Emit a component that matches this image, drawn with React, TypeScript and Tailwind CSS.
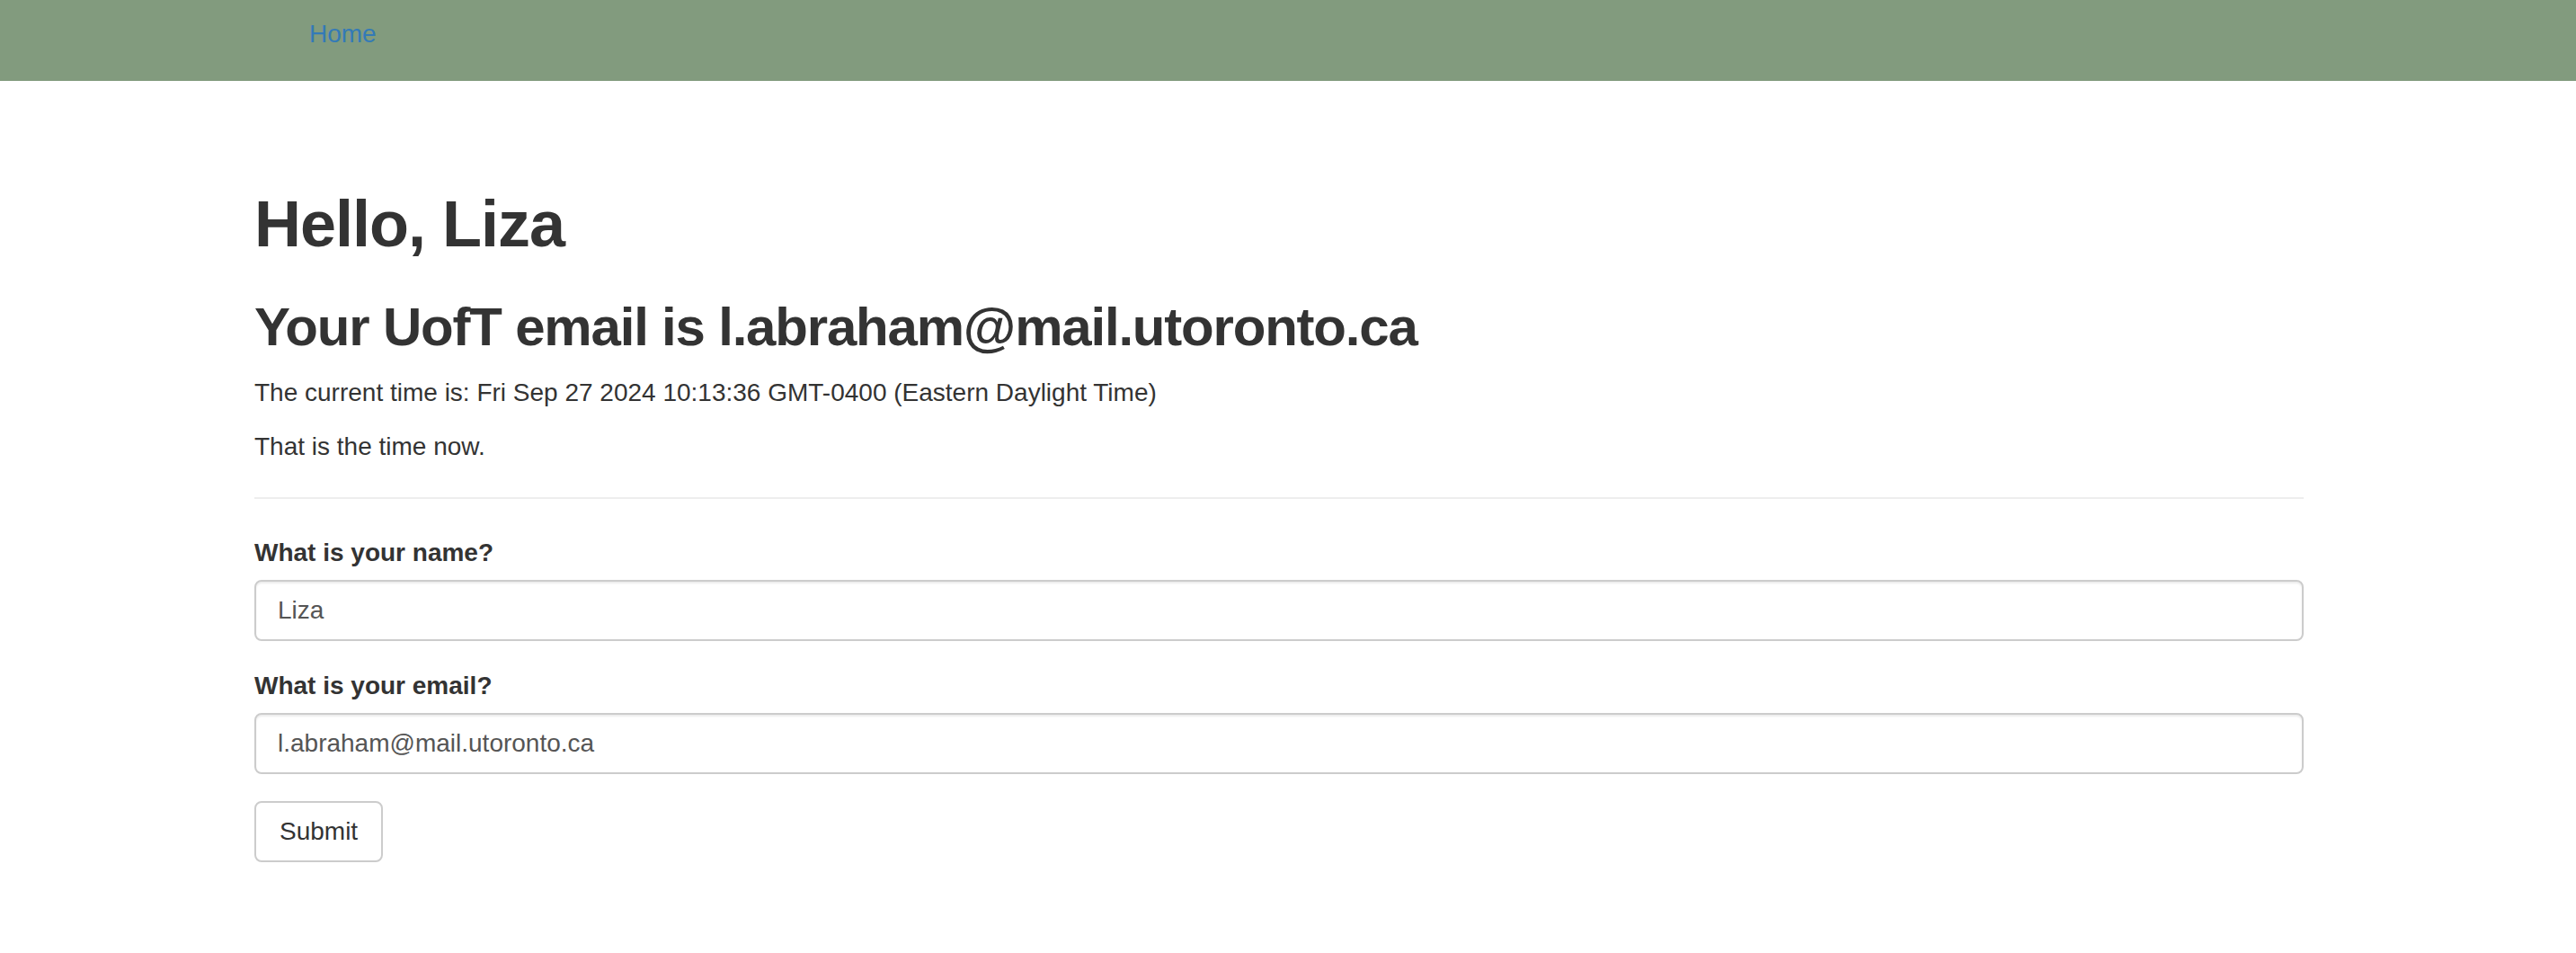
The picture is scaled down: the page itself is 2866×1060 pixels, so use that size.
import { useState } from 'react';

const App = () => {
  const [name, setName] = useState('Liza');
  const [email, setEmail] = useState('l.abraham@mail.utoronto.ca');

  return (
    <div className="min-h-screen bg-white text-[#333] font-['Liberation_Sans',Arial,sans-serif]">
      {/* Barra de navegación */}
      <nav className="h-[90px] bg-[#829b7e]">
        <div className="pl-[344px] pt-[18px]">
          <a href="#" className="text-[28px] leading-[40px] text-[#337ab7]">
            Home
          </a>
        </div>
      </nav>

      <div className="ml-[283px] w-[2280px] flex flex-col">
        <h1 className="mt-[120px] text-[72px] leading-[79px] font-bold tracking-[-1px]">Hello, Liza</h1>
        <h2 className="mt-[42px] text-[60px] leading-[66px] font-bold tracking-[-1.2px]">
          Your UofT email is l.abraham@mail.utoronto.ca
        </h2>
        <p className="mt-[20px] text-[28px] leading-[40px]">
          The current time is: Fri Sep 27 2024 10:13:36 GMT-0400 (Eastern Daylight Time)
        </p>
        <p className="mt-[20px] text-[28px] leading-[40px]">That is the time now.</p>

        <div className="mt-[36px] h-[2px] bg-[#eeeeee]" />

        {/* Formulario */}
        <form className="flex flex-col" onSubmit={(e) => e.preventDefault()}>
          <label htmlFor="name" className="mt-[40px] text-[28px] leading-[40px] font-bold">
            What is your name?
          </label>
          <input
            id="name"
            value={name}
            onChange={(e) => setName(e.target.value)}
            className="mt-[10px] h-[68px] rounded-[8px] border-2 border-[#cccccc] px-[24px] text-[28px] text-[#555] shadow-[inset_0_2px_2px_rgba(0,0,0,0.075)] outline-none"
          />
          <label htmlFor="email" className="mt-[30px] text-[28px] leading-[40px] font-bold">
            What is your email?
          </label>
          <input
            id="email"
            value={email}
            onChange={(e) => setEmail(e.target.value)}
            className="mt-[10px] h-[68px] rounded-[8px] border-2 border-[#cccccc] px-[24px] text-[28px] text-[#555] shadow-[inset_0_2px_2px_rgba(0,0,0,0.075)] outline-none"
          />
          <div className="mt-[30px]">
            <button
              type="submit"
              className="h-[68px] rounded-[8px] border-2 border-[#cccccc] bg-white px-[26px] text-[28px] text-[#333]"
            >
              Submit
            </button>
          </div>
        </form>
      </div>
    </div>
  );
};

export default App;
